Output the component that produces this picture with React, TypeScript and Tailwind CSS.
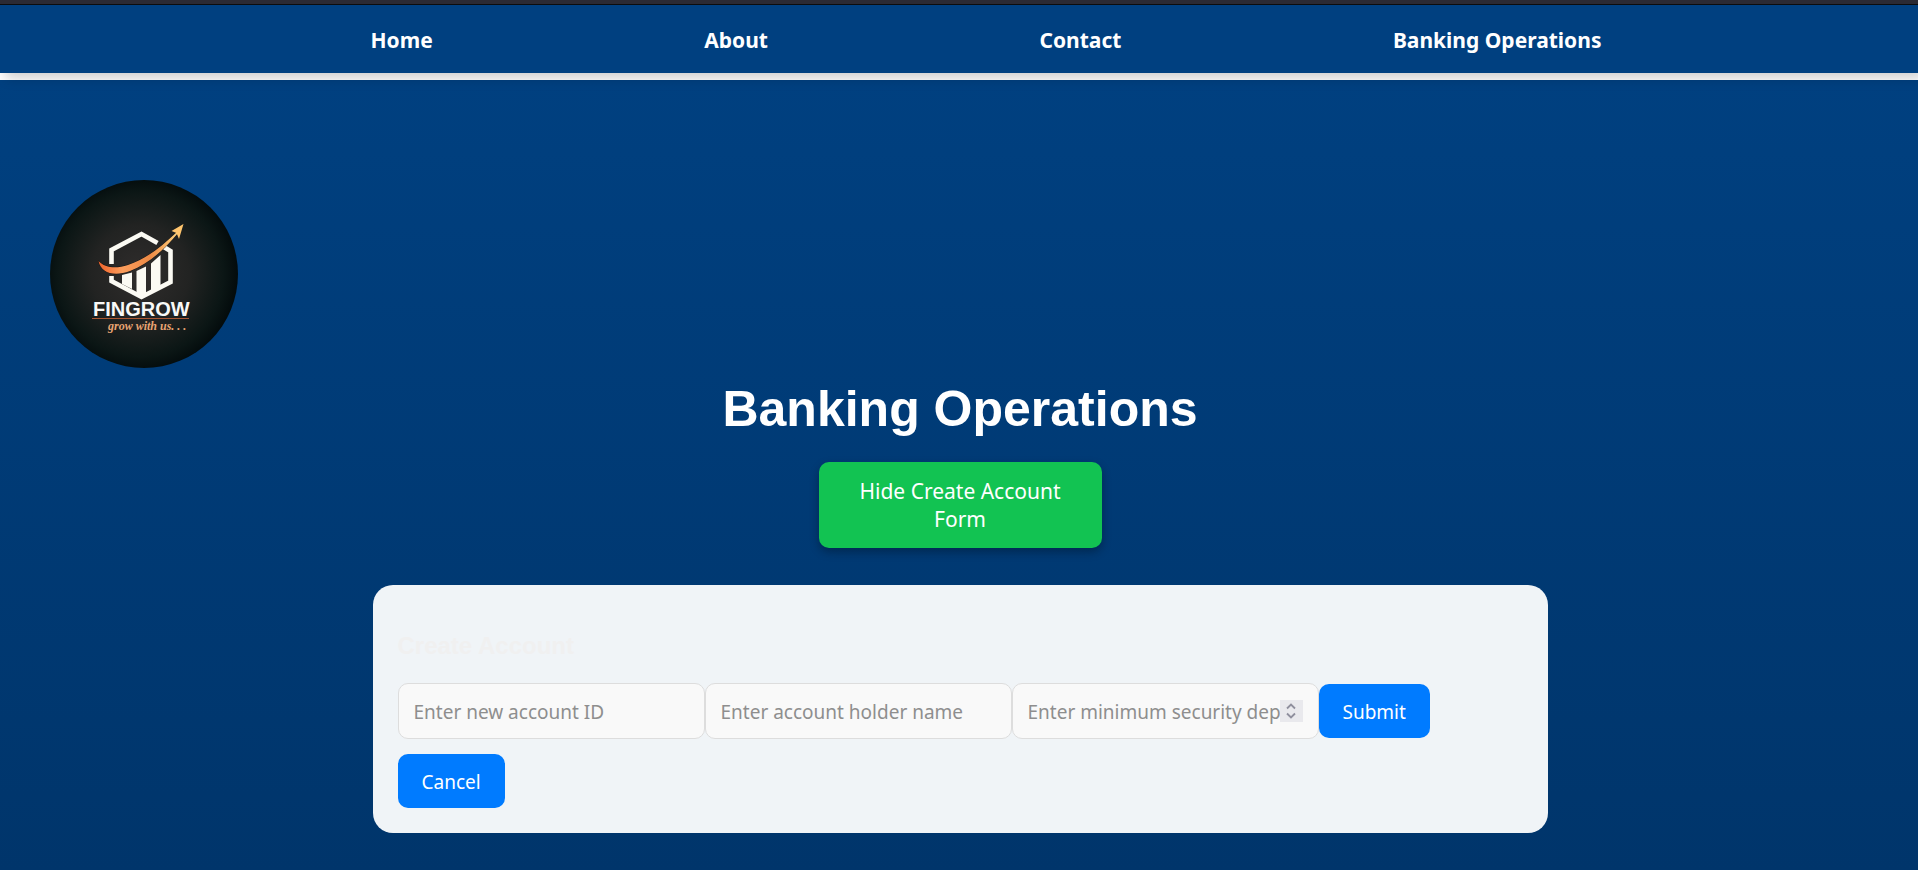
import React from "react";

const navLinks = ["Home", "About", "Contact", "Banking Operations"];

const inputClass =
  "h-14 w-[307px] rounded-[10px] border border-[#dddddd] bg-[#f9f9f9] px-[15px] pt-0.5 text-[19px] text-[#333333] placeholder:text-[#8e8e8e] focus:outline-none";
const buttonClass =
  "my-px h-[54px] rounded-[10px] bg-[#007bff] px-6 pt-0.5 text-[19px] text-white";

function Logo() {
  return (
    <svg viewBox="0 0 188 188" className="size-[188px]" role="img" aria-label="FinGrow">
      <defs>
        <radialGradient id="disc" cx="48%" cy="50%" r="52%">
          <stop offset="0" stopColor="#302d2c" />
          <stop offset="0.5" stopColor="#222322" />
          <stop offset="0.85" stopColor="#0b1615" />
          <stop offset="1" stopColor="#030b0c" />
        </radialGradient>
        <linearGradient id="swoosh" x1="0" y1="0" x2="1" y2="0">
          <stop offset="0" stopColor="#f0642c" />
          <stop offset="0.3" stopColor="#fb9d5c" />
          <stop offset="0.65" stopColor="#ee8a45" />
          <stop offset="1" stopColor="#ffd27c" />
        </linearGradient>
      </defs>
      <circle cx="94" cy="94" r="94" fill="url(#disc)" />
      <path
        d="M61.500 84V70L91.500 54L107.500 63M113 66.500L120.500 71V102L91.500 117L61.500 101V96"
        fill="none"
        stroke="#fbfaf3"
        strokeWidth="4.600"
      />
      <path
        d="M72 95L82 92.500V109L72 104ZM86.500 91L96 86.500V114L91.500 116L86.500 113.500ZM101 83.500L110.500 75V106.500L101 111Z"
        fill="#fbfaf3"
      />
      <path
        d="M48.500 81C55 88 66 89 78 85C96 79 111 67 127 52L128 53C113 71 98 84 80 91C64 97 51 93 48.500 81Z"
        fill="url(#swoosh)"
        stroke="#151515"
        strokeWidth="1"
        paintOrder="stroke"
      />
      <path d="M133.500 44L129 59L126.500 53L121.500 51Z" fill="#ffc56d" />
      <text x="43" y="136" fontFamily="'Liberation Sans', Arial, sans-serif" fontSize="20" fontWeight="700" fill="#f9f9f7">
        FINGROW
      </text>
      <path d="M42 138.500H139" stroke="#a95833" strokeWidth="1" />
      <text x="58" y="150" fontFamily="'Liberation Serif', serif" fontSize="12" fontStyle="italic" fontWeight="700" fill="#e9a573">
        grow with us. . .
      </text>
    </svg>
  );
}

function Spinner() {
  return (
    <span
      aria-hidden="true"
      className="pointer-events-none absolute top-[17px] right-4 flex h-[22px] w-[23px] items-center justify-center bg-[#e9e9ed]"
    >
      <svg viewBox="0 0 10 16" className="h-4 w-2.5" fill="none" stroke="#8f8f9d" strokeWidth="1.800">
        <path d="M1 5.500L5 1.500L9 5.500M1 10.500L5 14.500L9 10.500" />
      </svg>
    </span>
  );
}

export default function App() {
  return (
    <div className="min-h-screen bg-white font-['Noto_Sans',sans-serif]">
      <header className="relative border-t-4 border-[#2b2a33] shadow-[5px_5px_12px_rgba(0,0,0,0.2)]">
        <nav className="border-t border-[#0c0c0d] bg-[#004080] pr-[45px] pl-[99px]">
          <ul className="flex h-[68px] items-center justify-evenly pt-1">
            {navLinks.map((label) => (
              <li key={label}>
                <a href="#" className="text-[21px] font-bold text-white">
                  {label}
                </a>
              </li>
            ))}
          </ul>
        </nav>
      </header>

      <main className="mt-[7px] min-h-[790px] bg-linear-to-b from-[#004080] to-[#00356b] pt-[100px] pb-9">
        <div className="pl-[50px]">
          <Logo />
        </div>
        <div className="flex flex-col items-center pl-0.5">
          <h1 className="mt-3 font-['Liberation_Sans',Arial,sans-serif] text-[50px] leading-[58px] font-bold text-white">
            Banking Operations
          </h1>
          <button
            type="button"
            className="mt-6 w-[283px] rounded-[10px] bg-[#12c352] px-9 py-[15px] text-[21px] leading-7 text-white shadow-[0_4px_10px_rgba(0,0,0,0.3)]"
          >
            Hide Create Account Form
          </button>
          <section className="mt-[37px] w-full max-w-[1175px] rounded-[20px] bg-[#f0f4f7] px-[25px] pt-[25px] pb-6">
            <h3 className="mt-5 font-['Liberation_Sans',Arial,sans-serif] text-[24px] leading-8 font-bold text-[#f0f0f0]">
              Create Account
            </h3>
            <form className="mt-[21px] flex flex-wrap gap-y-3.5" onSubmit={(e) => e.preventDefault()}>
              <input type="text" aria-label="Account ID" placeholder="Enter new account ID" className={inputClass} />
              <input type="text" aria-label="Account holder name" placeholder="Enter account holder name" className={inputClass} />
              <div className="relative">
                <input
                  type="number"
                  aria-label="Minimum security deposit"
                  placeholder="Enter minimum security deposit"
                  className={`${inputClass} [appearance:textfield] [&::-webkit-inner-spin-button]:appearance-none`}
                />
                <Spinner />
              </div>
              <button type="submit" className={buttonClass}>
                Submit
              </button>
              <div className="w-full">
                <button type="button" className={buttonClass}>
                  Cancel
                </button>
              </div>
            </form>
          </section>
        </div>
      </main>
    </div>
  );
}
